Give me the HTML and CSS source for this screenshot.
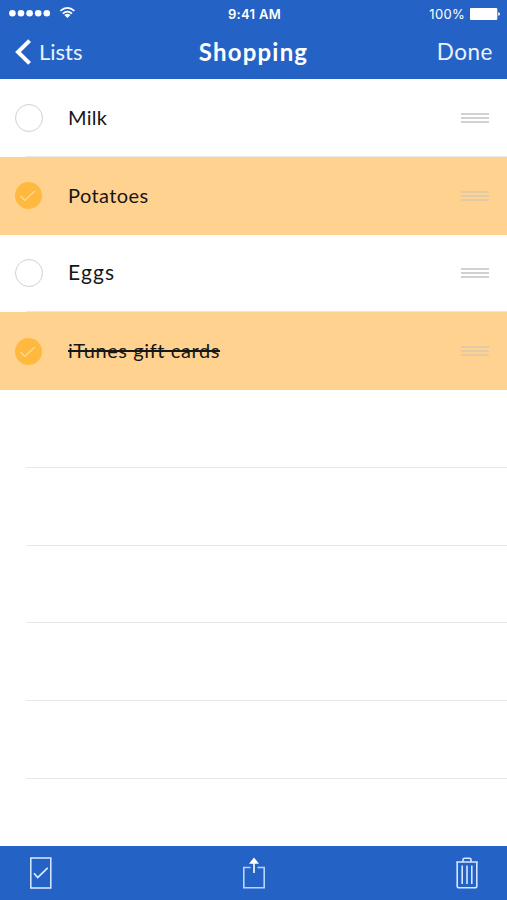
FILE: index.html
```html
<!DOCTYPE html>
<html lang="en">
<head>
<meta charset="utf-8">
<title>Shopping</title>
<link rel="stylesheet" href="styles.css">
</head>
<body>
<div class="app">
  <header class="header">
    <div class="status">
      <svg class="signal" width="70" height="16" viewBox="0 0 70 16" fill="#fff">
        <circle cx="3.4" cy="8.2" r="3.3"/><circle cx="12" cy="8.2" r="3.3"/><circle cx="20.6" cy="8.2" r="3.3"/><circle cx="29.2" cy="8.2" r="3.3"/><circle cx="37.8" cy="8.2" r="3.3"/>
        <g transform="translate(0 .7)"><g fill="none" stroke="#fff" stroke-width="1.7"><path d="M51.4 5.2Q58.4-1 65.4 5.2"/><path d="M53.8 7.9Q58.4 3.9 63 7.9"/></g>
        <path d="M55.3 9.3Q58.4 6.8 61.5 9.3L58.4 12.3Z"/></g>
      </svg>
      <span class="clock">9:41 AM</span>
      <span class="power"><span class="percent">100%</span>
        <svg width="30" height="12" viewBox="0 0 30 12" fill="#fff"><rect x="0" y="0" width="27.3" height="12" rx="1"/><path d="M28.2 4.2Q30 4.5 30 6T28.2 7.8Z"/></svg>
      </span>
    </div>
    <nav class="nav">
      <a class="back"><svg width="17" height="26" viewBox="0 0 17 26" fill="none" stroke="#fff" stroke-width="4"><path d="M14.6 1.6 3 13l11.6 11.4"/></svg><span class="lists">Lists</span></a>
      <h1 class="title">Shopping</h1>
      <a class="done">Done</a>
    </nav>
  </header>
  <main class="list">
    <div class="row"><span class="check"></span><span class="label milk">Milk</span><span class="handle"><i></i><i></i><i></i></span></div>
    <div class="row checked"><span class="check"><svg width="27" height="27" viewBox="0 0 27 27"><path d="m5.5 14 4.2 4.4L20 9"/></svg></span><span class="label potatoes">Potatoes</span><span class="handle"><i></i><i></i><i></i></span></div>
    <div class="row"><span class="check"></span><span class="label eggs">Eggs</span><span class="handle"><i></i><i></i><i></i></span></div>
    <div class="row checked"><span class="check"><svg width="27" height="27" viewBox="0 0 27 27"><path d="m5.5 14 4.2 4.4L20 9"/></svg></span><span class="label cards">iTunes gift cards</span><span class="handle"><i></i><i></i><i></i></span></div>
    <div class="row empty"></div>
    <div class="row empty"></div>
    <div class="row empty"></div>
    <div class="row empty"></div>
    <div class="row empty"></div>
  </main>
  <footer class="toolbar">
    <svg width="22" height="34" viewBox="0 0 22 34" fill="none" stroke="#dcebff" stroke-width="1.5"><rect x=".8" y="2" width="20" height="30"/><path d="m4 17.2 3.7 4.3 10-9.7" stroke-width="1.7"/></svg>
    <svg width="22" height="34" viewBox="0 0 22 34" fill="none" stroke="#b9d4fb" stroke-width="1.6"><path d="M7.5 11.5H.8v20.3h20.4V11.5h-6.7"/><path d="M11 17V6" stroke="#fff"/><path d="M11 1.5 16 7.7H6Z" fill="#fff" stroke="none"/></svg>
    <svg width="22" height="34" viewBox="0 0 22 34" fill="none" stroke="#d4e5ff" stroke-width="1.6"><path d="M.2 6h21.6M1.2 6v24q0 1.8 1.8 1.8h16q1.8 0 1.8-1.8V6M7 6V3.7q0-1.5 1.5-1.5h5q1.5 0 1.5 1.5V6M6.2 9.5v18.5M11 9.5v18.5M15.8 9.5v18.5"/></svg>
  </footer>
</div>
</body>
</html>
```

FILE: styles.css
```css
* { box-sizing: border-box; }
body { margin: 0; background: #fff; font-family: Lato, sans-serif; }
.app { width: 507px; height: 900px; display: flex; flex-direction: column; overflow: hidden; }
.header { height: 79px; flex: none; background: #2562c5; color: #fff; }
.status { height: 27px; display: grid; grid-template-columns: 1fr auto 1fr; align-items: center; padding: 0 7px 0 9px; font: 13px/16px Inter, sans-serif; }
.signal { display: block; margin-top: -1px; }
.clock { font-weight: 600; font-size: 13px; letter-spacing: .3px; }
.power { display: flex; justify-content: flex-end; align-items: center; gap: 5px; }
.percent { letter-spacing: .3px; }
.nav { height: 50px; display: grid; grid-template-columns: 1fr auto 1fr; align-items: center; padding: 0 15px; font-size: 22px; line-height: 30px; }
.back { display: flex; align-items: center; gap: 7px; color: #eaf2ff; }
.title { margin: 0; font-size: 24px; font-weight: 700; letter-spacing: 1.2px; line-height: 30px; }
.done { text-align: right; color: #eaf2ff; font-size: 22.5px; letter-spacing: .5px; margin-right: -1px; }
.list { flex: 1; min-height: 0; overflow: hidden; }
.row { height: 77.75px; display: flex; align-items: center; padding: 0 18px 0 15px; background: linear-gradient(#e8e8e8, #e8e8e8) 26px 100% / 100% 1px no-repeat; }
.checked { background: #ffd290; }
.check { width: 28px; height: 28px; flex: none; border: 1.5px solid #d2d2d4; border-radius: 50%; margin-right: 25px; }
.checked .check { border: 0; width: 27px; height: 27px; margin-right: 26px; background: #ffb93e; }
.check svg { display: block; fill: none; stroke: #ffd99b; stroke-width: 1.3; }
.label { color: #171717; font-size: 20px; line-height: 28px; white-space: nowrap; letter-spacing: .4px; margin-top: -2px; }
.milk { letter-spacing: .3px; }
.eggs { font-size: 21px; letter-spacing: 1.1px; }
.cards { letter-spacing: .6px; text-decoration: line-through; text-decoration-thickness: 2px; }
.handle { width: 28px; margin-left: auto; display: grid; gap: 2px; }
.handle i { height: 2px; background: #d1d1d3; }
.checked .handle i { background: #e3caa5; }
.toolbar { height: 54px; flex: none; background: #2562c5; display: flex; justify-content: space-between; align-items: center; padding: 0 29px 0 30px; }
```
